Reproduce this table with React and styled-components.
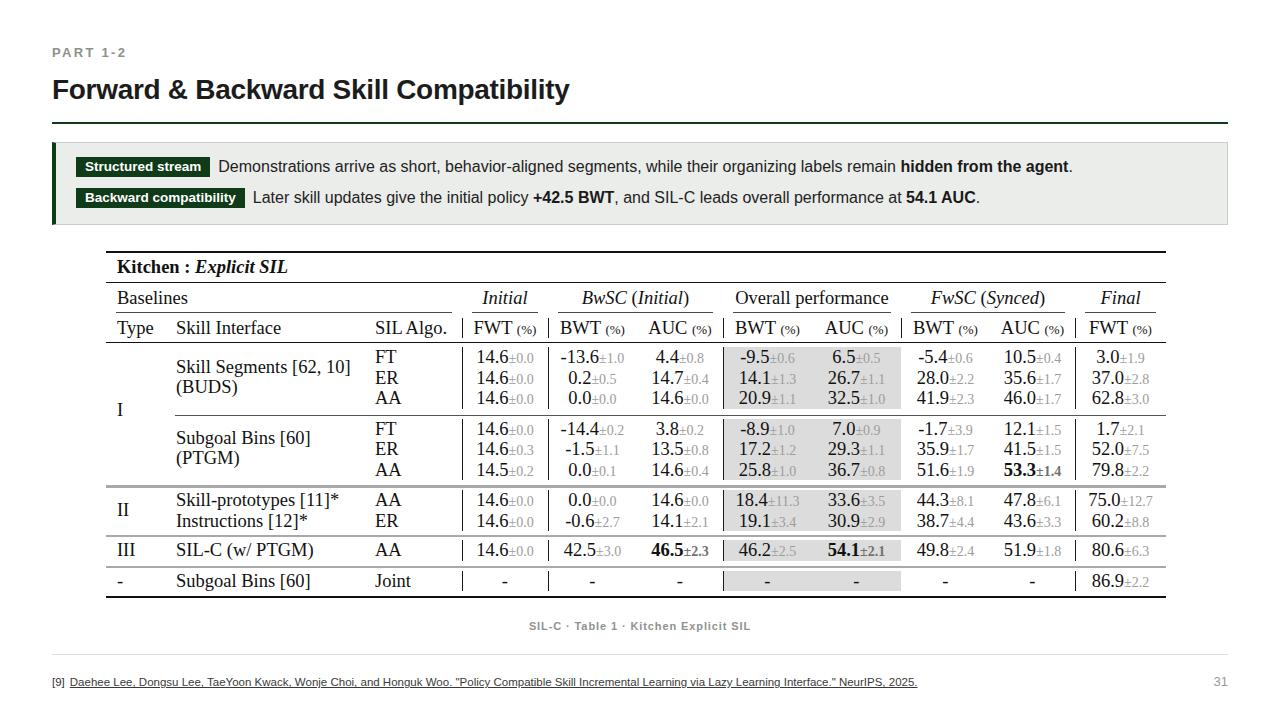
import styled, { createGlobalStyle, css } from 'styled-components';

const GlobalStyle = createGlobalStyle`
  * { box-sizing: border-box; }
  body {
    margin: 0;
    background: #ffffff;
    font-family: 'Liberation Sans', Arial, sans-serif;
  }
`;

const GREEN = '#0f3b19';

const values = {
  budsFT: ['14.6±0.0', '-13.6±1.0', '4.4±0.8', '-9.5±0.6', '6.5±0.5', '-5.4±0.6', '10.5±0.4', '3.0±1.9'],
  budsER: ['14.6±0.0', '0.2±0.5', '14.7±0.4', '14.1±1.3', '26.7±1.1', '28.0±2.2', '35.6±1.7', '37.0±2.8'],
  budsAA: ['14.6±0.0', '0.0±0.0', '14.6±0.0', '20.9±1.1', '32.5±1.0', '41.9±2.3', '46.0±1.7', '62.8±3.0'],
  ptgmFT: ['14.6±0.0', '-14.4±0.2', '3.8±0.2', '-8.9±1.0', '7.0±0.9', '-1.7±3.9', '12.1±1.5', '1.7±2.1'],
  ptgmER: ['14.6±0.3', '-1.5±1.1', '13.5±0.8', '17.2±1.2', '29.3±1.1', '35.9±1.7', '41.5±1.5', '52.0±7.5'],
  ptgmAA: ['14.5±0.2', '0.0±0.1', '14.6±0.4', '25.8±1.0', '36.7±0.8', '51.6±1.9', '*53.3±1.4', '79.8±2.2'],
  proto: ['14.6±0.0', '0.0±0.0', '14.6±0.0', '18.4±11.3', '33.6±3.5', '44.3±8.1', '47.8±6.1', '75.0±12.7'],
  instr: ['14.6±0.0', '-0.6±2.7', '14.1±2.1', '19.1±3.4', '30.9±2.9', '38.7±4.4', '43.6±3.3', '60.2±8.8'],
  silc: ['14.6±0.0', '42.5±3.0', '*46.5±2.3', '46.2±2.5', '*54.1±2.1', '49.8±2.4', '51.9±1.8', '80.6±6.3'],
  joint: ['-', '-', '-', '-', '-', '-', '-', '86.9±2.2'],
};

// bars and shading of the eight metric columns
const metricCols = [
  { bar: true },
  { bar: true },
  {},
  { bar: true, shade: true },
  { shade: true },
  {},
  {},
  { bar: true },
];

const heads = [
  { label: 'FWT', bar: true },
  { label: 'BWT', bar: true },
  { label: 'AUC' },
  { label: 'BWT', bar: true },
  { label: 'AUC' },
  { label: 'BWT', bar: true },
  { label: 'AUC' },
  { label: 'FWT', bar: true },
];

function Metric({ v }) {
  if (v === '-') return '-';
  const bold = v.startsWith('*');
  const [num, sd] = v.replace('*', '').split('±');
  return (
    <>
      <Num $bold={bold}>{num}</Num>
      <Pm $bold={bold}>±{sd}</Pm>
    </>
  );
}

function Metrics({ data }) {
  return data.map((v, i) => (
    <Cell key={i} $bar={metricCols[i].bar} $shade={metricCols[i].shade}>
      <Metric v={v} />
    </Cell>
  ));
}

export default function App() {
  return (
    <Page>
      <GlobalStyle />
      <Header>
        <Kicker>PART 1-2</Kicker>
        <Title>Forward &amp; Backward Skill Compatibility</Title>
      </Header>

      <Callout>
        <CalloutLine>
          <Badge>Structured stream</Badge>
          <span>
            Demonstrations arrive as short, behavior-aligned segments, while their organizing labels remain{' '}
            <b>hidden from the agent</b>.
          </span>
        </CalloutLine>
        <CalloutLine>
          <Badge>Backward compatibility</Badge>
          <span>
            Later skill updates give the initial policy <b>+42.5 BWT</b>, and SIL-C leads overall performance at{' '}
            <b>54.1 AUC</b>.
          </span>
        </CalloutLine>
      </Callout>

      <Figure>
        <Table>
          <colgroup>
            <col style={{ width: 69 }} />
            <col style={{ width: 190 }} />
            <col style={{ width: 97 }} />
            <col style={{ width: 86 }} />
            <col style={{ width: 89 }} />
            <col style={{ width: 86 }} />
            <col style={{ width: 89 }} />
            <col style={{ width: 89 }} />
            <col style={{ width: 89 }} />
            <col style={{ width: 85 }} />
            <col style={{ width: 91 }} />
          </colgroup>
          <thead>
            <tr>
              <TitleCell colSpan={11}>
                Kitchen : <i>Explicit SIL</i>
              </TitleCell>
            </tr>
            <tr>
              <GroupCell colSpan={3}>
                <GroupLabel $left>Baselines</GroupLabel>
              </GroupCell>
              <GroupCell>
                <GroupLabel>
                  <i>Initial</i>
                </GroupLabel>
              </GroupCell>
              <GroupCell colSpan={2}>
                <GroupLabel>
                  <i>BwSC</i> (<i>Initial</i>)
                </GroupLabel>
              </GroupCell>
              <GroupCell colSpan={2}>
                <GroupLabel>Overall performance</GroupLabel>
              </GroupCell>
              <GroupCell colSpan={2}>
                <GroupLabel>
                  <i>FwSC</i> (<i>Synced</i>)
                </GroupLabel>
              </GroupCell>
              <GroupCell>
                <GroupLabel>
                  <i>Final</i>
                </GroupLabel>
              </GroupCell>
            </tr>
            <Row $pt={4.5} $pb={4} $under>
              <Cell $indent={11}>Type</Cell>
              <Cell $indent={1}>Skill Interface</Cell>
              <Cell $indent={10}>SIL Algo.</Cell>
              {heads.map((h, i) => (
                <Cell key={i} $bar={h.bar}>
                  {h.label} <Unit>(%)</Unit>
                </Cell>
              ))}
            </Row>
          </thead>
          <tbody>
            <Row $pt={4}>
              <Cell $indent={11} $lift={12} rowSpan={6}>I</Cell>
              <Cell $indent={1} $lift={8} rowSpan={3}>
                Skill Segments [62, 10]
                <br />
                (BUDS)
              </Cell>
              <Cell $indent={10}>FT</Cell>
              <Metrics data={values.budsFT} />
            </Row>
            <Row>
              <Cell $indent={10}>ER</Cell>
              <Metrics data={values.budsER} />
            </Row>
            <Row $pb={6.5}>
              <Cell $indent={10}>AA</Cell>
              <Metrics data={values.budsAA} />
            </Row>

            <Row $pt={2.5} $rule="1px solid #555">
              <Cell $indent={1} $lift={7} rowSpan={3}>
                Subgoal Bins [60]
                <br />
                (PTGM)
              </Cell>
              <Cell $indent={10}>FT</Cell>
              <Metrics data={values.ptgmFT} />
            </Row>
            <Row>
              <Cell $indent={10}>ER</Cell>
              <Metrics data={values.ptgmER} />
            </Row>
            <Row $pb={5}>
              <Cell $indent={10}>AA</Cell>
              <Metrics data={values.ptgmAA} />
            </Row>

            <Row $pt={2} $rule="3px solid #a9a9a9">
              <Cell $indent={11} $lift={4} rowSpan={2}>II</Cell>
              <Cell $indent={1}>Skill-prototypes [11]*</Cell>
              <Cell $indent={10}>AA</Cell>
              <Metrics data={values.proto} />
            </Row>
            <Row $pb={4}>
              <Cell $indent={1}>Instructions [12]*</Cell>
              <Cell $indent={10}>ER</Cell>
              <Metrics data={values.instr} />
            </Row>

            <Row $pt={3} $pb={5} $rule="2px solid #a9a9a9">
              <Cell $indent={11}>III</Cell>
              <Cell $indent={1}>SIL-C (w/ PTGM)</Cell>
              <Cell $indent={10}>AA</Cell>
              <Metrics data={values.silc} />
            </Row>

            <Row $pt={3} $pb={5} $rule="2px solid #a9a9a9">
              <Cell $indent={11}>-</Cell>
              <Cell $indent={1}>Subgoal Bins [60]</Cell>
              <Cell $indent={10}>Joint</Cell>
              <Metrics data={values.joint} />
            </Row>
          </tbody>
        </Table>
        <Caption>SIL-C · Table 1 · Kitchen Explicit SIL</Caption>
      </Figure>

      <Footer>
        <Footnote>
          <RefNo>[9]</RefNo>
          <RefLink>
            Daehee Lee, Dongsu Lee, TaeYoon Kwack, Wonje Choi, and Honguk Woo. "Policy Compatible Skill Incremental
            Learning via Lazy Learning Interface." NeurIPS, 2025.
          </RefLink>
        </Footnote>
        <PageNo>31</PageNo>
      </Footer>
    </Page>
  );
}

const Page = styled.div`
  width: 1280px;
  height: 720px;
  padding: 45px 52px 0;
  display: flex;
  flex-direction: column;
  overflow: hidden;
`;

const Header = styled.div`
  display: flex;
  flex-direction: column;
  gap: 12px;
  padding-bottom: 15px;
  border-bottom: 2px solid ${GREEN};
`;

const Kicker = styled.div`
  font-size: 13px;
  line-height: 16px;
  font-weight: 700;
  letter-spacing: 2.3px;
  color: #8c918c;
`;

const Title = styled.h1`
  margin: 0;
  font-size: 28px;
  line-height: 34px;
  font-weight: 700;
  letter-spacing: -0.3px;
  color: #1c1c1c;
`;

const Callout = styled.div`
  margin-top: 18px;
  display: flex;
  flex-direction: column;
  gap: 7px;
  padding: 12px 20px 14px;
  background: #ebedea;
  border: 1px solid #c9cec9;
  border-left: 4px solid ${GREEN};
`;

const CalloutLine = styled.div`
  display: flex;
  align-items: center;
  gap: 8px;
  font-size: 16px;
  line-height: 24px;
  color: #222222;

  b {
    font-weight: 700;
    color: #1a1a1a;
  }
`;

const Badge = styled.span`
  background: ${GREEN};
  color: #ffffff;
  font-size: 13.5px;
  font-weight: 700;
  line-height: 16px;
  padding: 2px 9px;
  white-space: nowrap;
`;

const Figure = styled.div`
  margin-top: 26px;
  display: flex;
  flex-direction: column;
  align-items: center;
`;

const Table = styled.table`
  width: 1060px;
  margin-left: -8px;
  table-layout: fixed;
  border-collapse: separate;
  border-spacing: 0;
  border-top: 2px solid #111111;
  border-bottom: 2px solid #111111;
  font-family: 'Liberation Serif', 'Times New Roman', serif;
  font-size: 18.5px;
  color: #111111;
`;

const TitleCell = styled.td`
  height: 30px;
  padding: 0 0 0 11px;
  font-weight: 700;
  border-bottom: 1px solid #111111;
  vertical-align: middle;
`;

const GroupCell = styled.td`
  padding: 0;
`;

const GroupLabel = styled.div`
  height: 30px;
  margin: 0 10px;
  padding: 4px 0 0 ${(p) => (p.$left ? '1px' : '0')};
  line-height: 22px;
  text-align: ${(p) => (p.$left ? 'left' : 'center')};
  border-bottom: 1px solid #4a4a4a;
  white-space: nowrap;
`;

const Row = styled.tr`
  & > td {
    padding-top: ${(p) => p.$pt ?? 0}px;
    padding-bottom: ${(p) => p.$pb ?? 0}px;
    ${(p) => p.$rule && `border-top: ${p.$rule};`}
    ${(p) => p.$under && 'border-bottom: 1px solid #111111;'}
  }
`;

const Cell = styled.td`
  height: 20.5px;
  line-height: 20.5px;
  white-space: nowrap;
  vertical-align: middle;
  text-align: ${(p) => (p.$indent != null ? 'left' : 'center')};
  padding-left: ${(p) => p.$indent ?? 0}px;
  padding-right: 0;
  background-clip: content-box;
  background-origin: content-box;
  ${(p) =>
    p.$bar &&
    css`
      background-image: linear-gradient(#1a1a1a, #1a1a1a);
      background-size: 1px 100%;
      background-repeat: no-repeat;
      background-position: 0 0;
    `}
  ${(p) => p.$shade && 'background-color: #dcdcdc;'}
  ${(p) =>
    p.$lift &&
    css`
      &&& {
        padding-bottom: ${p.$lift}px;
      }
    `}
`;

const Num = styled.span`
  line-height: 1;
  font-weight: ${(p) => (p.$bold ? 700 : 400)};
`;

const Pm = styled.span`
  line-height: 1;
  font-size: 14px;
  color: ${(p) => (p.$bold ? '#707070' : '#9c9c9c')};
  font-weight: ${(p) => (p.$bold ? 700 : 400)};
`;

const Unit = styled.span`
  line-height: 1;
  font-size: 13px;
`;

const Caption = styled.div`
  margin-top: 21px;
  font-size: 11px;
  line-height: 14px;
  font-weight: 700;
  letter-spacing: 0.9px;
  color: #8e938e;
`;

const Footer = styled.div`
  margin-top: 21px;
  padding-top: 19px;
  border-top: 1px solid #dde0dd;
  display: flex;
  justify-content: space-between;
  align-items: baseline;
`;

const Footnote = styled.div`
  font-size: 11.5px;
  line-height: 14px;
  color: #333333;
  display: flex;
`;

const RefNo = styled.span`
  margin-right: 5px;
`;

const RefLink = styled.span`
  color: #3a3a3a;
  text-decoration: underline;
`;

const PageNo = styled.div`
  font-size: 13px;
  line-height: 16px;
  color: #9a9a9a;
`;
